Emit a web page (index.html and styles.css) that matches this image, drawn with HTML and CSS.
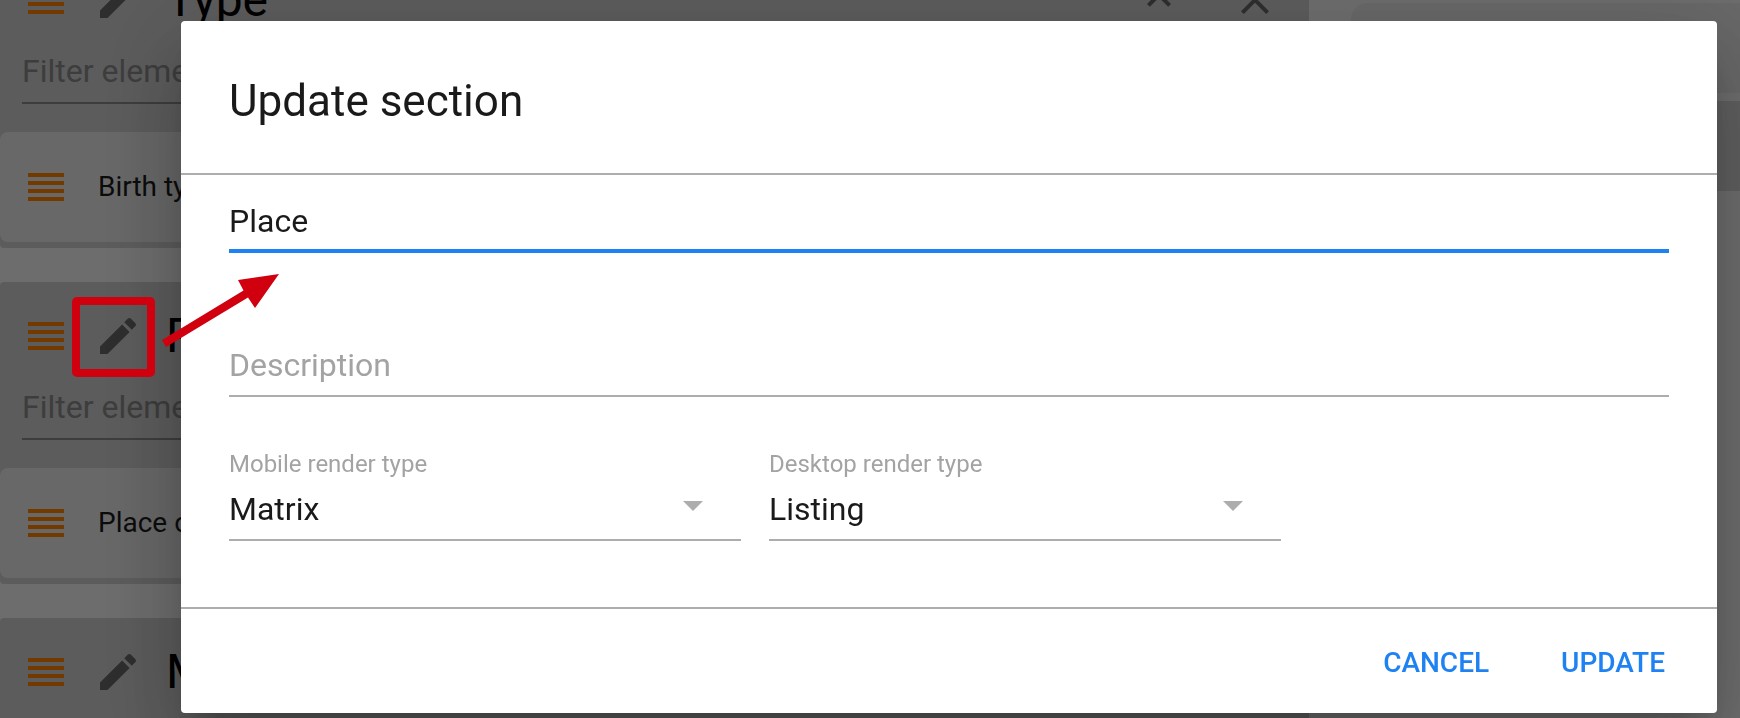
FILE: index.html
```html
<!DOCTYPE html>
<html lang="en">
<head>
<meta charset="utf-8">
<meta name="viewport" content="width=device-width, initial-scale=1">
<title>Update section</title>
<link rel="stylesheet" href="styles.css">
</head>
<body>
<svg class="symbols" aria-hidden="true">
  <symbol id="drag" viewBox="0 0 36 28"><path d="M0 0h36v4H0zM0 8h36v4H0zM0 16h36v4H0zM0 24h36v4H0z"/></symbol>
  <symbol id="edit" viewBox="0 0 24 24"><path d="M3 17.25V21h3.75L17.81 9.94l-3.75-3.75L3 17.25zM20.71 7.04a1 1 0 0 0 0-1.41l-2.34-2.34a1 1 0 0 0-1.41 0l-1.83 1.83 3.75 3.75 1.83-1.83z"/></symbol>
  <symbol id="collapse" viewBox="0 0 24 24"><path d="M12 8l-6 6 1.41 1.41L12 10.83l4.59 4.58L18 14z"/></symbol>
  <symbol id="close" viewBox="0 0 24 24"><path d="M19 6.41L17.59 5 12 10.59 6.41 5 5 6.41 10.59 12 5 17.59 6.41 19 12 13.41 17.59 19 19 17.59 13.41 12z"/></symbol>
</svg>

<div class="page">
  <main class="sections">
    <section class="section">
      <header class="section-head">
        <svg class="drag"><use href="#drag"/></svg>
        <button class="icon-button" aria-label="Edit section"><svg class="icon"><use href="#edit"/></svg></button>
        <h2 class="section-title">Type</h2>
        <div class="section-tools">
          <button class="icon-button" aria-label="Collapse"><svg class="icon"><use href="#collapse"/></svg></button>
          <button class="icon-button" aria-label="Remove"><svg class="icon"><use href="#close"/></svg></button>
        </div>
      </header>
      <input class="filter" type="text" placeholder="Filter elements" aria-label="Filter elements">
      <div class="row"><svg class="drag"><use href="#drag"/></svg><span>Birth type</span></div>
    </section>
    <section class="section">
      <header class="section-head">
        <svg class="drag"><use href="#drag"/></svg>
        <button class="icon-button" aria-label="Edit section"><svg class="icon"><use href="#edit"/></svg></button>
        <h2 class="section-title">Place</h2>
      </header>
      <input class="filter" type="text" placeholder="Filter elements" aria-label="Filter elements">
      <div class="row"><svg class="drag"><use href="#drag"/></svg><span>Place of birth</span></div>
    </section>
    <section class="section">
      <header class="section-head">
        <svg class="drag"><use href="#drag"/></svg>
        <button class="icon-button" aria-label="Edit section"><svg class="icon"><use href="#edit"/></svg></button>
        <h2 class="section-title">Mother</h2>
      </header>
    </section>
  </main>
  <aside class="side">
    <div class="side-card"></div>
    <div class="side-card side-card-dark"></div>
  </aside>
</div>

<div class="overlay">
  <form class="dialog" role="dialog" aria-labelledby="dialog-title">
    <header class="dialog-head"><h1 class="dialog-title" id="dialog-title">Update section</h1></header>
    <div class="dialog-body">
      <input class="field field-active" type="text" value="Place" aria-label="Name">
      <input class="field" type="text" placeholder="Description" aria-label="Description">
      <div class="selects">
        <div class="select-group">
          <label class="label" for="mobile">Mobile render type</label>
          <div class="select-box">
            <select class="field" id="mobile"><option>Matrix</option><option>Listing</option></select>
            <svg class="caret" viewBox="0 0 20 10"><path d="M0 0h20L10 10z"/></svg>
          </div>
        </div>
        <div class="select-group">
          <label class="label" for="desktop">Desktop render type</label>
          <div class="select-box">
            <select class="field" id="desktop"><option>Listing</option><option>Matrix</option></select>
            <svg class="caret" viewBox="0 0 20 10"><path d="M0 0h20L10 10z"/></svg>
          </div>
        </div>
      </div>
    </div>
    <footer class="dialog-foot">
      <button class="action" type="button">CANCEL</button>
      <button class="action" type="submit">UPDATE</button>
    </footer>
  </form>
</div>

<svg class="callout" viewBox="0 0 210 110" aria-hidden="true">
  <rect x="4" y="31" width="75" height="72" rx="1"/>
  <path d="M90 70L171.500 20.500L166 10L207 4L183 38L176 27.500L94 77z"/>
</svg>
</body>
</html>
```

FILE: styles.css
```css
* { box-sizing: border-box; }

body {
  margin: 0;
  height: 100vh;
  overflow: hidden;
  background: #f2f2f2;
  color: #1a1a1a;
  font-family: Roboto, "Liberation Sans", sans-serif;
  font-size: 32px;
}

button, input, select { font: inherit; color: inherit; }

.symbols { display: none; }

.page { display: flex; }

/* The list is scrolled part of the way into its first section. */
.sections {
  flex: 1;
  min-width: 0;
  display: flex;
  flex-direction: column;
  gap: 34px;
  margin-top: -54px;
}

.section {
  padding: 6px 0;
  border-radius: 4px;
  background: #ccc;
}

.section-head {
  display: flex;
  align-items: center;
  height: 96px;
  padding: 0 30px 0 28px;
}

.drag {
  flex: none;
  width: 36px;
  height: 28px;
  margin-right: 30px;
  fill: #ff8100;
}

.icon-button {
  display: flex;
  padding: 0;
  border: 0;
  background: none;
}

.icon {
  width: 48px;
  height: 48px;
  fill: #666;
}

.section-title {
  margin: 0 0 0 24px;
  font-size: 48px;
  font-weight: 400;
  line-height: 56px;
  color: #000;
}

.section-tools {
  display: flex;
  gap: 48px;
  margin-left: auto;
}

.filter {
  display: block;
  width: calc(100% - 44px);
  height: 56px;
  margin: 0 22px 28px;
  padding: 0 0 8px;
  border: 0;
  border-bottom: 2px solid #888;
  background: none;
}

.filter::placeholder { color: #888; }

.row {
  display: flex;
  align-items: center;
  height: 110px;
  padding: 0 28px;
  border-radius: 8px;
  background: #e6e6e6;
  font-size: 28px;
}

.row span { padding-bottom: 2px; }

.row .drag { margin-right: 34px; }

.side {
  width: 431px;
  padding: 3px 0 0 42px;
}

.side-card {
  height: 90px;
  margin-bottom: 8px;
  border-radius: 16px 0 0 0;
  background: #e6e6e6;
}

.side-card-dark {
  border-radius: 0;
  background: #d4d4d4;
}

.overlay {
  position: fixed;
  inset: 0;
  padding: 21px 23px 0 181px;
  background: rgba(0, 0, 0, 0.55);
}

.dialog {
  border-radius: 4px;
  background: #fff;
  box-shadow:
    0 22px 30px -14px rgba(0, 0, 0, 0.2),
    0 48px 76px 6px rgba(0, 0, 0, 0.14),
    0 18px 92px 16px rgba(0, 0, 0, 0.12);
}

.dialog-head {
  padding: 48px 48px 40px;
  border-bottom: 2px solid #adadad;
}

.dialog-title {
  margin: 0;
  font-size: 44px;
  font-weight: 400;
  line-height: 64px;
}

.dialog-body { padding: 22px 48px 66px; }

.field {
  display: block;
  width: 100%;
  height: 56px;
  padding: 0 0 6px;
  border: 0;
  border-bottom: 2px solid #adadad;
  border-radius: 0;
  outline: 0;
  background: none;
  appearance: none;
}

.field::placeholder { color: #a3a3a3; }

.field-active {
  margin-bottom: 88px;
  padding-bottom: 4px;
  border-bottom: 4px solid #1f82f2;
}

.selects {
  display: flex;
  gap: 28px;
  margin-top: 52px;
}

.select-group { width: 512px; }

.label {
  display: block;
  margin-bottom: 6px;
  font-size: 24px;
  line-height: 30px;
  color: #a3a3a3;
}

.select-box { display: grid; }

.select-box > * { grid-area: 1 / 1; }

.caret {
  place-self: start end;
  width: 20px;
  height: 10px;
  margin: 16px 38px 0 0;
  fill: #adadad;
  pointer-events: none;
}

.dialog-foot {
  display: flex;
  justify-content: flex-end;
  gap: 40px;
  padding: 21px 36px 19px;
  border-top: 2px solid #adadad;
}

.action {
  height: 64px;
  padding: 0 16px;
  border: 0;
  background: none;
  color: #1f82f2;
  font-size: 28px;
  font-weight: 500;
}

/* Highlight box and arrow drawn over the page and the dialog. */
.callout {
  position: absolute;
  left: 72px;
  top: 270px;
  width: 210px;
  height: 110px;
  overflow: visible;
  fill: #d1000f;
}

.callout rect {
  fill: none;
  stroke: #d1000f;
  stroke-width: 8px;
}
```
